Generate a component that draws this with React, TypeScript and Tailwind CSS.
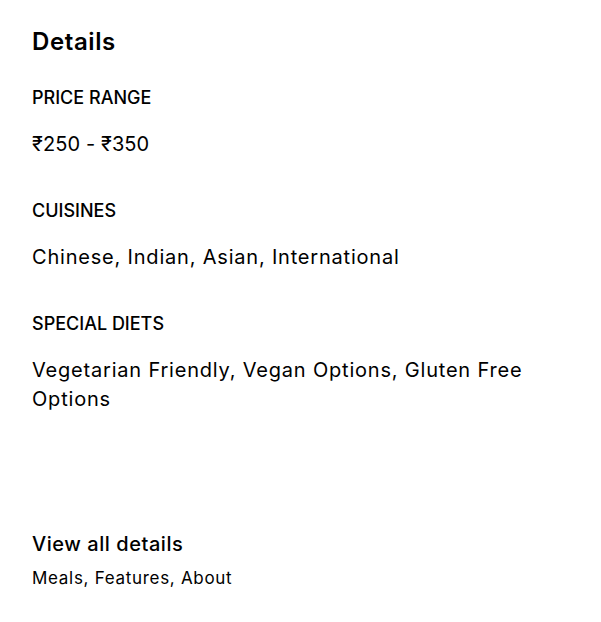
import React from "react";

const font = { fontFamily: "Inter, 'Noto Sans', sans-serif" };

function Section({ label, value, valueClass }: { label: string; value: string; valueClass: string }) {
  return (
    <div className="flex flex-col gap-[21px]">
      <div className="text-[18px] leading-[22px] font-medium text-black">{label}</div>
      <div className={valueClass}>{value}</div>
    </div>
  );
}

export default function App() {
  return (
    <div className="bg-white w-[601px] h-[622px] px-[32px] pt-[27px]" style={font}>
      <div className="w-[537px] flex flex-col">
        <h2 className="text-[24px] leading-[30px] font-semibold text-black tracking-[0.6px]">Details</h2>
        <div className="mt-[30px] flex flex-col gap-[41px]">
          <Section
            label="PRICE RANGE"
            value="₹250 - ₹350"
            valueClass="text-[20px] leading-[29px] text-black tracking-[0.1px]"
          />
          <Section
            label="CUISINES"
            value="Chinese, Indian, Asian, International"
            valueClass="text-[20px] leading-[29px] text-black tracking-[0.8px]"
          />
          <Section
            label="SPECIAL DIETS"
            value="Vegetarian Friendly, Vegan Options, Gluten Free Options"
            valueClass="text-[20px] leading-[29px] text-black tracking-[0.8px]"
          />
        </div>
        <div className="mt-[116px] flex flex-col">
          <div className="text-[20px] leading-[28px] font-medium text-black tracking-[0.55px]">View all details</div>
          <div className="mt-[8px] text-[17px] leading-[24px] text-black tracking-[0.7px]">Meals, Features, About</div>
        </div>
      </div>
    </div>
  );
}
